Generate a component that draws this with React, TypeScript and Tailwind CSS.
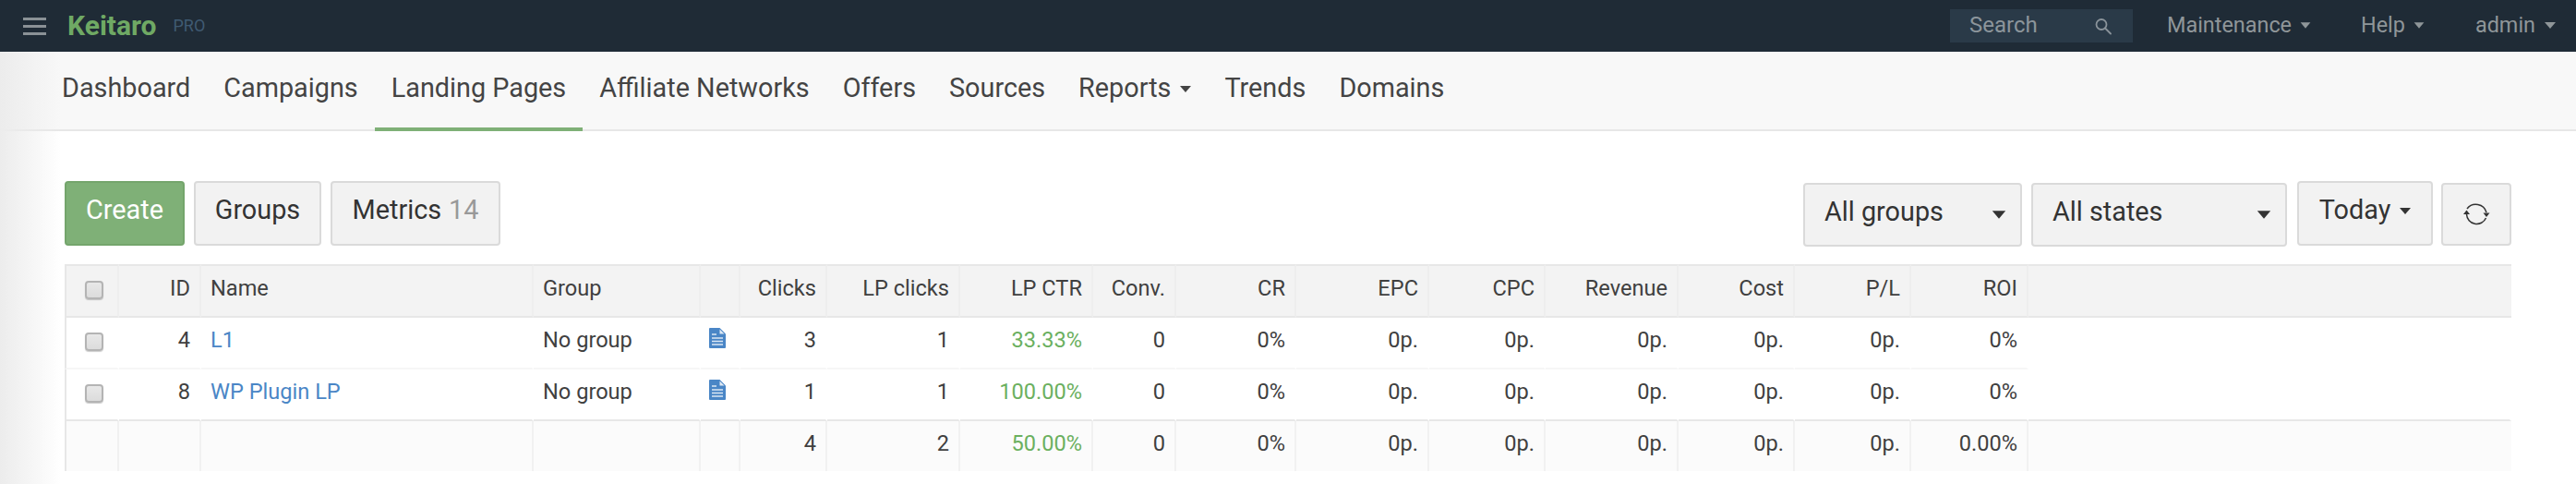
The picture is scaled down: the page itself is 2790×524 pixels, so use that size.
import React from "react";

const NAV = [
    { label: "Dashboard" },
    { label: "Campaigns" },
    { label: "Landing Pages", active: true },
    { label: "Affiliate Networks" },
    { label: "Offers" },
    { label: "Sources" },
    { label: "Reports", caret: true },
    { label: "Trends" },
    { label: "Domains" },
];

const COLS = [59, 89, 360, 181, 43, 94, 144, 144, 90, 130, 144, 126, 144, 126, 126, 127, 523];
const HEAD = ["Clicks", "LP clicks", "LP CTR", "Conv.", "CR", "EPC", "CPC", "Revenue", "Cost", "P/L", "ROI"];

const ROWS = [
    { id: "4", name: "L1", values: ["3", "1", "33.33%", "0", "0%", "0p.", "0p.", "0p.", "0p.", "0p.", "0%"] },
    { id: "8", name: "WP Plugin LP", values: ["1", "1", "100.00%", "0", "0%", "0p.", "0p.", "0p.", "0p.", "0p.", "0%"] },
];
const TOTALS = ["4", "2", "50.00%", "0", "0%", "0p.", "0p.", "0p.", "0p.", "0p.", "0.00%"];

const Caret = ({ className = "" }: { className?: string }) => (
    <span className={`inline-block h-0 w-0 border-x-[6px] border-t-[7px] border-x-transparent border-t-current ${className}`} />
);

const Checkbox = () => (
    <span className="-mt-[2px] ml-[20px] block h-[20px] w-[20px] rounded-[4px] border-2 border-[#b4b4b4] bg-gradient-to-b from-[#e8e8e8] to-[#dcdcdc] shadow-[0_1px_1px_rgba(0,0,0,0.2)]" />
);

const FileIcon = () => (
    <svg width="18" height="22" viewBox="0 0 18 22" className="ml-[9px] block">
        <path d="M1 0h10.5L18 6.5V21a1 1 0 0 1-1 1H1a1 1 0 0 1-1-1V1a1 1 0 0 1 1-1z" fill="#4a86c6" />
        <path d="M11.5 1.5l5 5h-5z" fill="#dfe9f4" />
        <path d="M3 7h5M3 11h12M3 14.5h12M3 18h12" stroke="#dce8f4" strokeWidth="1.3" />
    </svg>
);

const SearchIcon = () => (
    <svg width="20" height="20" viewBox="0 0 20 20" fill="none" stroke="#8a939a" strokeWidth="1.8" className="mt-[2px]">
        <circle cx="7" cy="7.5" r="5.5" />
        <path d="M11 11.5l6 6" strokeLinecap="round" />
    </svg>
);

const RefreshIcon = () => (
    <svg width="44" height="44" viewBox="0 0 44 44" fill="none" stroke="#333" strokeWidth="1.5">
        <path d="M12 16A12 12 0 0 1 33 20" />
        <path d="M11.5 22A11 11 0 0 0 32.5 26" />
        <path d="M29.5 20.5h7l-3.5 4.5z" fill="#333" stroke="none" />
        <path d="M8 22h7l-3.500-4.500z" fill="#333" stroke="none" />
    </svg>
);

const App = () => {
    return (
        <div className="relative h-[524px] w-[2790px] overflow-hidden bg-white text-[23.6px] text-[#404040] font-['Roboto',sans-serif]">
            <header className="flex h-[56px] items-center bg-[#1f2b36] pr-[22px]">
                <div className="ml-[25px] flex w-[25px] flex-col gap-[5px]">
                    <span className="h-[3px] bg-[#8a9196]" />
                    <span className="h-[3px] bg-[#8a9196]" />
                    <span className="h-[3px] bg-[#8a9196]" />
                </div>
                <span className="ml-[23px] text-[30px] font-bold leading-none text-[#6fa964]">Keitaro</span>
                <span className="ml-[18px] text-[18px] leading-none text-[#3f5a72]">PRO</span>
                <div className="ml-auto flex h-[36px] w-[198px] items-center justify-between bg-[#2a3a48] pl-[21px] pr-[21px] text-[24px] text-[#8c959b]">
                    <span className="-mt-[2px]">Search</span>
                    <SearchIcon />
                </div>
                <div className="ml-[37px] flex items-center gap-[9px] text-[23.4px] text-[#8f9699]">
                    Maintenance <Caret className="scale-90" />
                </div>
                <div className="ml-[54px] flex items-center gap-[9px] text-[23.4px] text-[#8f9699]">
                    Help <Caret className="scale-90" />
                </div>
                <div className="ml-[55px] flex items-center gap-[10px] text-[23.4px] text-[#8f9699]">
                    admin <Caret />
                </div>
            </header>

            <nav className="flex h-[86px] border-b-2 border-[#e7e7e7] bg-[#f8f8f8] pl-[49px] text-[28.8px] text-[#444]">
                {NAV.map((item) => (
                    <div
                        key={item.label}
                        className={`-mb-[2px] flex items-center gap-[10px] border-b-4 px-[18px] pb-[2px] ${item.active ? "border-[#7fb077]" : "border-transparent"}`}
                    >
                        {item.label}
                        {item.caret && <Caret />}
                    </div>
                ))}
            </nav>

            <div className="mx-[70px] mt-[54px] flex items-start text-[28.8px] text-[#333]">
                <div className="flex h-[70px] w-[130px] items-center justify-center rounded-[4px] border-2 border-[#74a56c] bg-[#7fb077] pb-[6px] text-white">Create</div>
                <div className="ml-[10px] flex h-[70px] w-[138px] items-center justify-center rounded-[4px] border-2 border-[#dadada] bg-[#f2f2f2] pb-[6px]">Groups</div>
                <div className="ml-[10px] flex h-[70px] w-[184px] items-center justify-center gap-[8px] rounded-[4px] border-2 border-[#dadada] bg-[#f2f2f2] pb-[6px]">
                    Metrics <span className="text-[#999]">14</span>
                </div>
                <div className="ml-auto mt-[2px] flex h-[69px] w-[237px] items-center justify-between rounded-[4px] border-2 border-[#dadada] bg-[#f2f2f2] pl-[21px] pr-[17px]">
                    <span className="pb-[6px]">All groups</span> <Caret className="scale-[1.2]" />
                </div>
                <div className="ml-[10px] mt-[2px] flex h-[69px] w-[277px] items-center justify-between rounded-[4px] border-2 border-[#dadada] bg-[#f2f2f2] pl-[21px] pr-[17px]">
                    <span className="pb-[6px]">All states</span> <Caret className="scale-[1.2]" />
                </div>
                <div className="ml-[11px] flex h-[70px] w-[147px] items-center justify-center gap-[10px] rounded-[4px] border-2 border-[#dadada] bg-[#f2f2f2] pb-[6px]">
                    Today <Caret />
                </div>
                <div className="ml-[9px] mt-[2px] flex h-[68px] w-[76px] items-center justify-center rounded-[4px] border-2 border-[#dadada] bg-[#f2f2f2]">
                    <RefreshIcon />
                </div>
            </div>

            <table className="ml-[70px] mt-[19px] w-[2650px] table-fixed border-separate border-spacing-0">
                <colgroup>
                    {COLS.map((w, i) => (
                        <col key={i} style={{ width: w }} />
                    ))}
                </colgroup>
                <thead>
                    <tr className="bg-[#f3f3f3] [&>th]:h-[58px] [&>th]:border-y-2 [&>th]:border-r-2 [&>th]:border-y-[#e7e7e7] [&>th]:border-r-[#eeeeee] [&>th]:px-[10px] [&>th]:pb-[4px] [&>th]:font-normal">
                        <th className="!border-l-2 !border-l-[#e7e7e7] !px-0 !pb-0"><Checkbox /></th>
                        <th className="text-right">ID</th>
                        <th className="text-left">Name</th>
                        <th className="text-left">Group</th>
                        <th />
                        {HEAD.map((h) => (
                            <th key={h} className="text-right">{h}</th>
                        ))}
                        <th className="!border-r-0" />
                    </tr>
                </thead>
                <tbody>
                    {ROWS.map((row, r) => (
                        <tr
                            key={row.id}
                            className={`[&>td]:h-[56px] [&>td]:border-b-2 [&>td]:border-r-2 [&>td]:border-r-white [&>td]:px-[10px] [&>td]:pb-[4px] ${r === 1 ? "[&>td]:border-b-[#e7e7e7]" : "[&>td]:border-b-[#f6f6f6]"}`}
                        >
                            <td className="!border-l-2 !border-l-[#e7e7e7] !px-0 !pb-0"><Checkbox /></td>
                            <td className="text-right">{row.id}</td>
                            <td className="text-[#4a86c6]">{row.name}</td>
                            <td>No group</td>
                            <td className="!px-0 !pb-0 !pt-[11px] align-top"><FileIcon /></td>
                            {row.values.map((v, i) => (
                                <td key={i} className={`text-right ${i === 2 ? "text-[#6bb05f]" : ""}`}>{v}</td>
                            ))}
                            <td className={r === 0 ? "!border-b-white" : ""} />
                        </tr>
                    ))}
                    <tr className="bg-[#fbfbfb] [&>td]:h-[54px] [&>td]:border-r-2 [&>td]:border-r-[#f1f1f1] [&>td]:px-[10px] [&>td]:pb-[4px]">
                        <td className="!border-l-2 !border-l-[#e7e7e7]" /><td /><td /><td /><td />
                        {TOTALS.map((v, i) => (
                            <td key={i} className={`text-right ${i === 2 ? "text-[#6bb05f]" : ""}`}>{v}</td>
                        ))}
                        <td className="!border-r-0" />
                    </tr>
                </tbody>
            </table>

            {/* sidebar shadow over the left edge */}
            <div className="pointer-events-none absolute bottom-0 left-0 top-[56px] w-[66px] bg-gradient-to-r from-[#ececec] to-transparent" />
        </div>
    );
};

export default App;
